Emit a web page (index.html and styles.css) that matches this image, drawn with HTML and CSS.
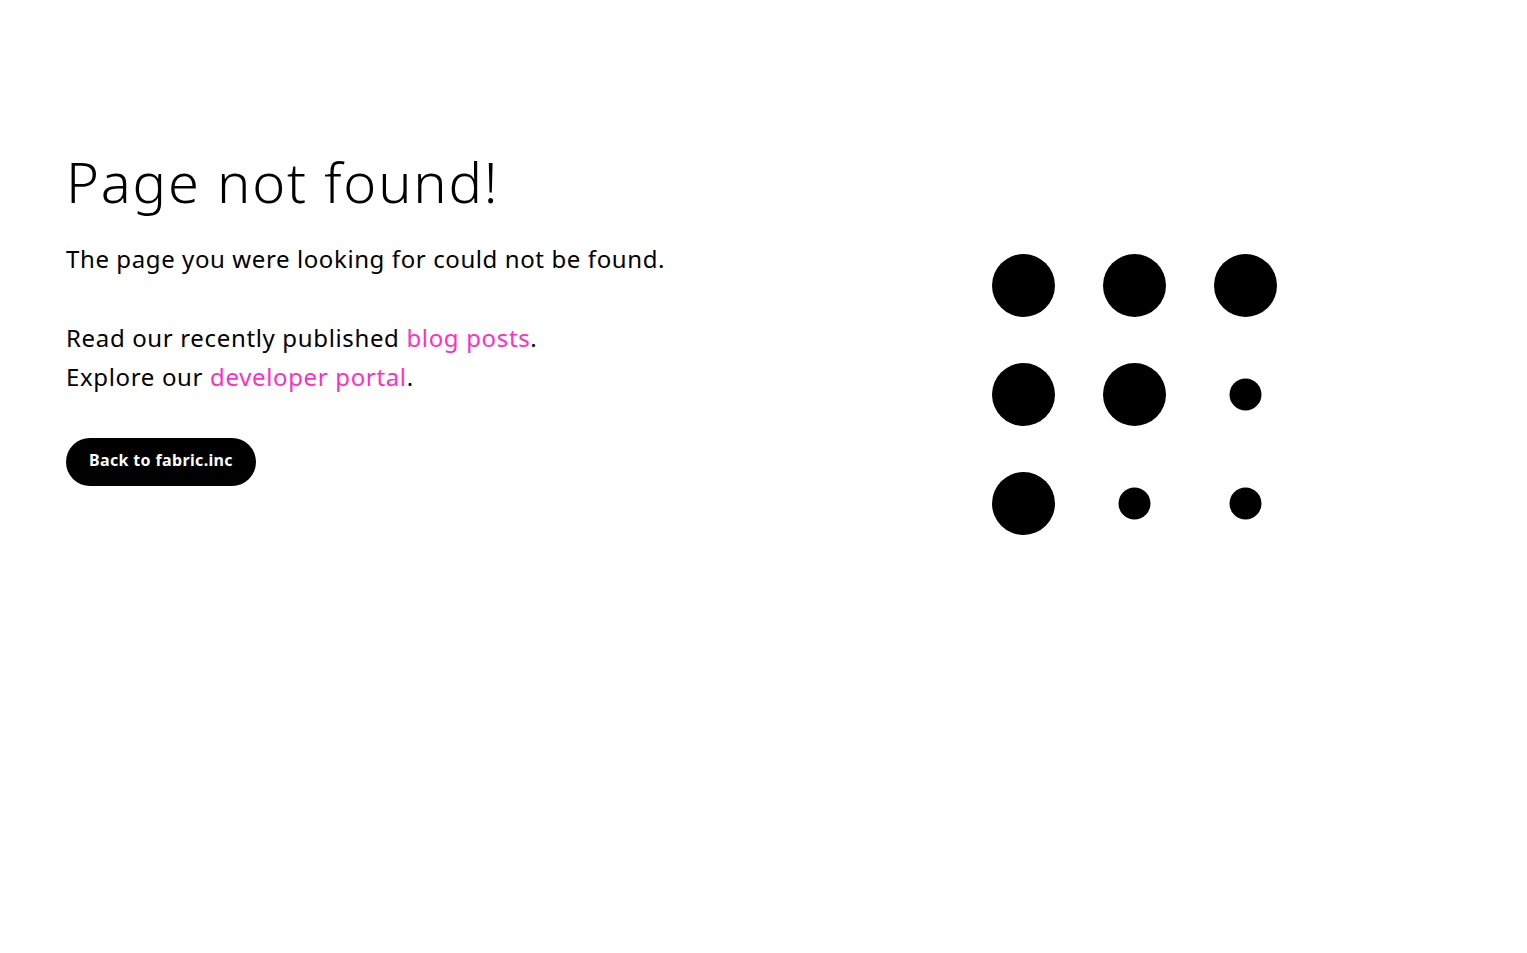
FILE: index.html
```html
<!DOCTYPE html>
<html>
<head>
	<meta charset="utf-8">
	<title>Page not found | fabric</title>
	<link rel="stylesheet" href="styles.css">
</head>
<body>
	<main class="notfound">
		<section class="intro">
			<h1>Page not found!</h1>
			<p class="lead">The page you were looking for could not be found.</p>
			<p class="links">
				Read our recently published <a href="#">blog posts</a>.<br>
				Explore our <a href="#">developer portal</a>.
			</p>
			<a class="btn" href="#">Back to fabric.inc</a>
		</section>
		<div class="dots">
			<svg width="286" height="282" viewBox="0 0 286 282">
				<circle cx="31.5" cy="31.5" r="31.5"/>
				<circle cx="142.5" cy="31.5" r="31.5"/>
				<circle cx="253.5" cy="31.5" r="31.5"/>
				<circle cx="31.5" cy="140.5" r="31.5"/>
				<circle cx="142.5" cy="140.5" r="31.5"/>
				<circle cx="253.5" cy="140.5" r="16"/>
				<circle cx="31.5" cy="249.5" r="31.5"/>
				<circle cx="142.5" cy="249.5" r="16"/>
				<circle cx="253.5" cy="249.5" r="16"/>
			</svg>
		</div>
	</main>
</body>
</html>
```

FILE: styles.css
```css
body {
	margin: 0;
	font-family: "Noto Sans", Arial, sans-serif;
	color: #000;
	background-color: #fff;
}
.notfound {
	display: flex;
	justify-content: space-between;
	padding: 146px 249px 0 66px;
}
.intro h1 {
	margin: 0;
	font-size: 56px;
	font-weight: 300;
	line-height: 70px;
	letter-spacing: 1.8px;
}
.lead {
	margin: 27px 0 0;
	font-size: 24px;
	line-height: 32px;
	letter-spacing: 0.6px;
}
.links {
	margin: 43px 0 0;
	font-size: 24px;
	line-height: 39px;
	letter-spacing: 0.65px;
}
.links a {
	color: #ff2fc4;
	text-decoration: none;
}
.btn {
	display: inline-block;
	margin-top: 42px;
	padding: 0 23px;
	height: 48px;
	line-height: 44px;
	border-radius: 24px;
	background-color: #000;
	color: #fff;
	font-size: 16px;
	font-weight: 700;
	letter-spacing: 0.35px;
	text-decoration: none;
}
.dots {
	margin-top: 108px;
}
.dots svg {
	display: block;
	fill: #000;
}
```
